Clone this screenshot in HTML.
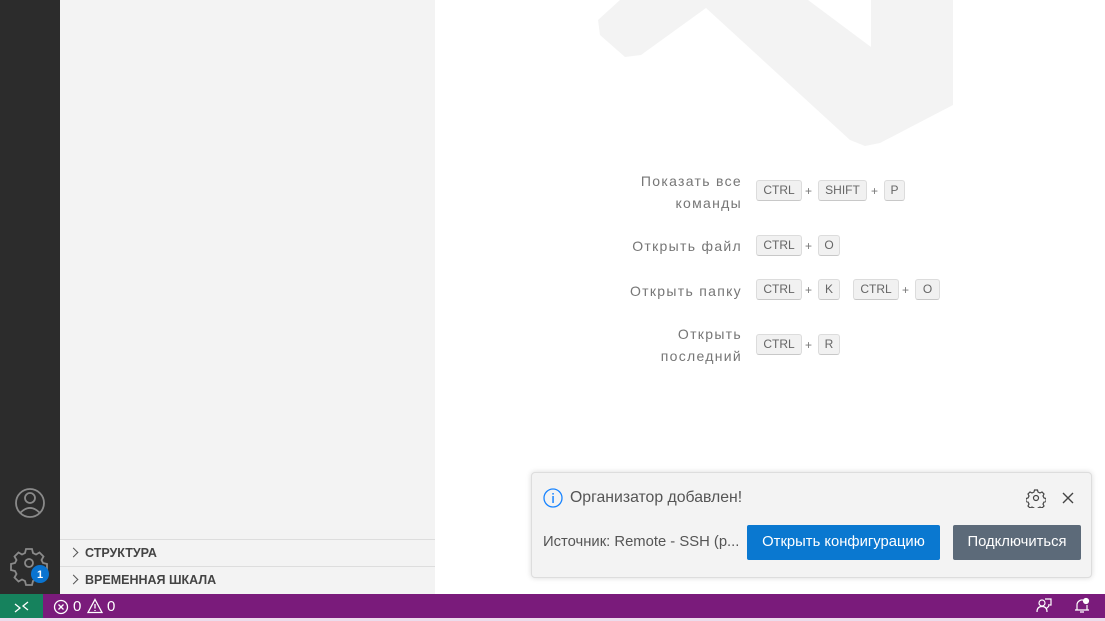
<!DOCTYPE html>
<html><head><meta charset="utf-8"><style>
*{margin:0;padding:0;box-sizing:border-box}
body{width:1105px;height:621px;overflow:hidden;background:#fff;font-family:"Liberation Sans",sans-serif;position:relative}
.abs{position:absolute}
.lbl{position:absolute;right:363px;text-align:right;color:#767676;font-size:14px;letter-spacing:1.3px;line-height:22px;white-space:nowrap}
.k{position:absolute;height:21px;background:#f1f1f1;border:1px solid #dcdcdc;border-bottom-color:#c8c8c8;border-radius:3px;font-size:12px;color:#666;text-align:center;line-height:19px}
.p{position:absolute;font-size:12px;color:#777;line-height:21px}
.sec{position:absolute;left:60px;width:375px;height:27px;border-top:1px solid #ddd;font-size:12.5px;font-weight:bold;color:#444;line-height:26px;padding-left:25px}
.sec:before{content:"";position:absolute;left:10px;top:9px;width:6px;height:6px;border-right:1.3px solid #555;border-top:1.3px solid #555;transform:rotate(45deg)}
</style></head><body>
<div class="abs" style="left:0;top:0;width:60px;height:594px;background:#2c2c2c"></div>
<div class="abs" style="left:60px;top:0;width:375px;height:594px;background:#f3f3f3"></div>
<svg class="abs" style="left:0;top:0" width="1105" height="594">
<polygon points="620,0 598,20 600,35 625,57 641,55 706,8 850,140 865,146 880,143 953,105 953,0 871,0 871,47 808,0" fill="#f3f3f3"/>
<g fill="none" stroke="#8a8a8a" stroke-width="1.8">
<circle cx="30" cy="503" r="14"/><circle cx="30" cy="498" r="5"/><path d="M20 513 Q30 503 40 513"/>
<circle cx="29" cy="563" r="4"/>
<path d="M26 549 h6 l1 4 l3 1.5 l3.5-2 l4 4 l-2 3.5 l1.5 3 l4 1 v6 l-4 1 l-1.5 3 l2 3.5 l-4 4 l-3.5-2 l-3 1.5 l-1 4 h-6 l-1-4 l-3-1.5 l-3.5 2 l-4-4 l2-3.5 l-1.5-3 l-4-1 v-6 l4-1 l1.5-3 l-2-3.5 l4-4 l3.5 2 l3-1.5z"/>
</g>
<circle cx="40" cy="574" r="9" fill="#0a74d0"/>
<text x="40" y="578" fill="#fff" font-size="11" font-weight="bold" text-anchor="middle" font-family="Liberation Sans">1</text>
</svg>
<div class="sec" style="top:539px">СТРУКТУРА</div>
<div class="sec" style="top:566px">ВРЕМЕННАЯ ШКАЛА</div>

<div class="lbl" style="top:170px">Показать все<br>команды</div>
<div class="k" style="left:756px;top:180px;width:46px">CTRL</div><div class="p" style="left:805px;top:181px">+</div>
<div class="k" style="left:818px;top:180px;width:49px">SHIFT</div><div class="p" style="left:871px;top:181px">+</div>
<div class="k" style="left:884px;top:180px;width:21px">P</div>
<div class="lbl" style="top:235px">Открыть файл</div>
<div class="k" style="left:756px;top:235px;width:46px">CTRL</div><div class="p" style="left:805px;top:236px">+</div>
<div class="k" style="left:818px;top:235px;width:22px">O</div>
<div class="lbl" style="top:280px">Открыть папку</div>
<div class="k" style="left:756px;top:279px;width:46px">CTRL</div><div class="p" style="left:805px;top:280px">+</div>
<div class="k" style="left:818px;top:279px;width:22px">K</div>
<div class="k" style="left:853px;top:279px;width:46px">CTRL</div><div class="p" style="left:902px;top:280px">+</div>
<div class="k" style="left:915px;top:279px;width:25px">O</div>
<div class="lbl" style="top:323px">Открыть<br>последний</div>
<div class="k" style="left:756px;top:334px;width:46px">CTRL</div><div class="p" style="left:805px;top:335px">+</div>
<div class="k" style="left:818px;top:334px;width:22px">R</div>

<div class="abs" style="left:531px;top:472px;width:561px;height:106px;background:#f3f3f3;border:1px solid #ddd;border-radius:4px;box-shadow:0 0 6px rgba(0,0,0,.15)"></div>
<svg class="abs" style="left:543px;top:488px" width="22" height="22"><circle cx="10" cy="10" r="9" fill="none" stroke="#1a85ff" stroke-width="1.3"/><rect x="9.3" y="8" width="1.5" height="7" fill="#1a85ff"/><rect x="9.3" y="5" width="1.5" height="1.6" fill="#1a85ff"/></svg>
<div class="abs" style="left:570px;top:489px;font-size:15.8px;color:#555">Организатор добавлен!</div>
<svg class="abs" style="left:1026px;top:488px" width="20" height="20" fill="none" stroke="#444" stroke-width="1.2"><circle cx="10" cy="10" r="2.5"/><path d="M8.5 2h3l.5 2 2 1 2-1 2 2-1 2 1 2 2 .5v3l-2 .5-1 2 1 2-2 2-2-1-2 1-.5 2h-3l-.5-2-2-1-2 1-2-2 1-2-1-2-2-.5v-3l2-.5 1-2-1-2 2-2 2 1 2-1z"/></svg>
<svg class="abs" style="left:1062px;top:492px" width="12" height="12" stroke="#444" stroke-width="1.4"><path d="M1 1L11 11M11 1L1 11"/></svg>
<div class="abs" style="left:543px;top:534px;font-size:14.8px;color:#555">Источник: Remote - SSH (р...</div>
<div class="abs" style="left:747px;top:525px;width:193px;height:35px;background:#0a78d0;color:#fff;font-size:14.8px;line-height:35px;text-align:center;border-radius:2px">Открыть конфигурацию</div>
<div class="abs" style="left:953px;top:525px;width:128px;height:35px;background:#5c6a79;color:#fff;font-size:14.8px;line-height:35px;text-align:center;border-radius:2px">Подключиться</div>

<div class="abs" style="left:0;top:594px;width:1105px;height:24px;background:#7a1b7b"></div>
<div class="abs" style="left:0;top:594px;width:43px;height:24px;background:#16825d"></div>
<svg class="abs" style="left:13px;top:598px" width="18" height="16" stroke="#fff" stroke-width="1.3" fill="none"><path d="M2 12l5-4-5-4M15 2l-5 4 5 4" transform="translate(0,2)"/></svg>
<svg class="abs" style="left:53px;top:599px" width="16" height="16" stroke="#fff" stroke-width="1.3" fill="none"><circle cx="8" cy="8" r="6.5"/><path d="M5.5 5.5l5 5M10.5 5.5l-5 5"/></svg>
<div class="abs" style="left:73px;top:598px;color:#fff;font-size:15px">0</div>
<svg class="abs" style="left:87px;top:598px" width="16" height="16" stroke="#fff" stroke-width="1.3" fill="none"><path d="M8 1.5L15 14.5H1z"/><path d="M8 6v4.5M8 12v1"/></svg>
<div class="abs" style="left:107px;top:598px;color:#fff;font-size:15px">0</div>
<svg class="abs" style="left:1035px;top:597px" width="18" height="18" stroke="#fff" stroke-width="1.2" fill="none"><circle cx="7" cy="6" r="3"/><path d="M2 15c0-4 2-5.5 5-5.5s5 1.5 5 5.5M10 2h6v6h-3M11 12l3-3"/></svg>
<svg class="abs" style="left:1073px;top:597px" width="18" height="18" stroke="#fff" stroke-width="1.2" fill="none"><path d="M4 13V8a5 5 0 0 1 8-4M14 8v5M2 13h14M7 15h4"/><circle cx="13" cy="4" r="2.5" fill="#fff"/></svg>
<div class="abs" style="left:0;top:618px;width:1105px;height:3px;background:#ecdcec"></div>
</body></html>
